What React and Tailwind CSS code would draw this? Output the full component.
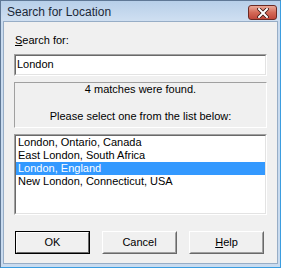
import React from "react";

const items = [
  "London, Ontario, Canada",
  "East London, South Africa",
  "London, England",
  "New London, Connecticut, USA",
];

function Sunken({ className = "", children }) {
  return (
    <div className={"border border-t-[#a0a0a0] border-l-[#a0a0a0] border-r-white border-b-white " + className}>
      <div className="h-full w-full border border-t-[#696969] border-l-[#696969] border-r-[#e3e3e3] border-b-[#e3e3e3] bg-white">
        {children}
      </div>
    </div>
  );
}

function Button({ children, isDefault }) {
  return (
    <button
      className={
        "h-[23px] w-[75px] p-0 " +
        (isDefault ? "border border-black" : "border border-t-white border-l-white border-r-[#696969] border-b-[#696969]")
      }
    >
      <div
        className={
          "flex h-full w-full items-center justify-center bg-[#f0f0f0] text-[11px] leading-[13px] text-black " +
          (isDefault
            ? "border border-t-white border-l-white border-r-[#696969] border-b-[#696969]"
            : "border border-t-[#f0f0f0] border-l-[#f0f0f0] border-r-[#a0a0a0] border-b-[#a0a0a0]")
        }
      >
        {children}
      </div>
    </button>
  );
}

export default function App() {
  return (
    <div
      className="flex h-[268px] w-[281px] flex-col border border-l-[#5f7896] border-t-[#5f7896] border-r-[#3b9de0] border-b-[#3b9de0] bg-[#c9dbef]"
      style={{ fontFamily: '"Liberation Sans", Arial, sans-serif' }}
    >
      {/* title bar */}
      <div className="flex h-[20px] items-start justify-between bg-gradient-to-b from-[#b7cfe9] to-[#cfdff1]">
        <div className="pl-[6px] pt-[4px] text-[12px] leading-[15px] text-[#1b2838]">Search for Location</div>
        <div className="mr-[3px] mt-[4px] flex h-[15px] w-[29px] items-center justify-center rounded-[3px] border border-[#6b2a24] bg-gradient-to-b from-[#e9a898] via-[#d46a58] to-[#c0473a]">
          <svg width="12" height="10" viewBox="0 0 12 10">
            <path d="M2 1 L10 9 M10 1 L2 9" stroke="#3a1410" strokeWidth="3.6" strokeLinecap="square" />
            <path d="M2 1 L10 9 M10 1 L2 9" stroke="#ffffff" strokeWidth="2" strokeLinecap="square" />
          </svg>
        </div>
      </div>

      {/* client area */}
      <div className="mx-[2px] mb-[3px] flex flex-1 flex-col border border-[#97adc6] bg-[#f0f0f0] px-[10px] pt-[12px] text-[11px] leading-[13px] text-black">
        <div className="h-[13px] pl-[1px]">
          <span className="underline">S</span>earch for:
        </div>

        <Sunken className="mt-[7px] h-[22px]">
          <div className="flex h-full items-center pl-[1px] pb-[1px]">London</div>
        </Sunken>

        <div className="mt-[6px] flex h-[46px] flex-col items-center border border-t-[#a0a0a0] border-l-[#a0a0a0] border-r-white border-b-white">
          <div className="h-[13px]">4 matches were found.</div>
          <div className="mt-[14px] h-[13px]">Please select one from the list below:</div>
        </div>

        <Sunken className="mt-[6px] h-[81px]">
          <div className="flex flex-col">
            {items.map((item, i) => (
              <div
                key={item}
                className={"h-[13px] pl-[2px] " + (i === 2 ? "bg-[#3399ff] text-white" : "")}
              >
                {item}
              </div>
            ))}
          </div>
        </Sunken>

        <div className="mt-[16px] flex gap-[12px] pl-[1px]">
          <Button isDefault>OK</Button>
          <Button>Cancel</Button>
          <Button>
            <span className="underline">H</span>elp
          </Button>
        </div>
      </div>
    </div>
  );
}
